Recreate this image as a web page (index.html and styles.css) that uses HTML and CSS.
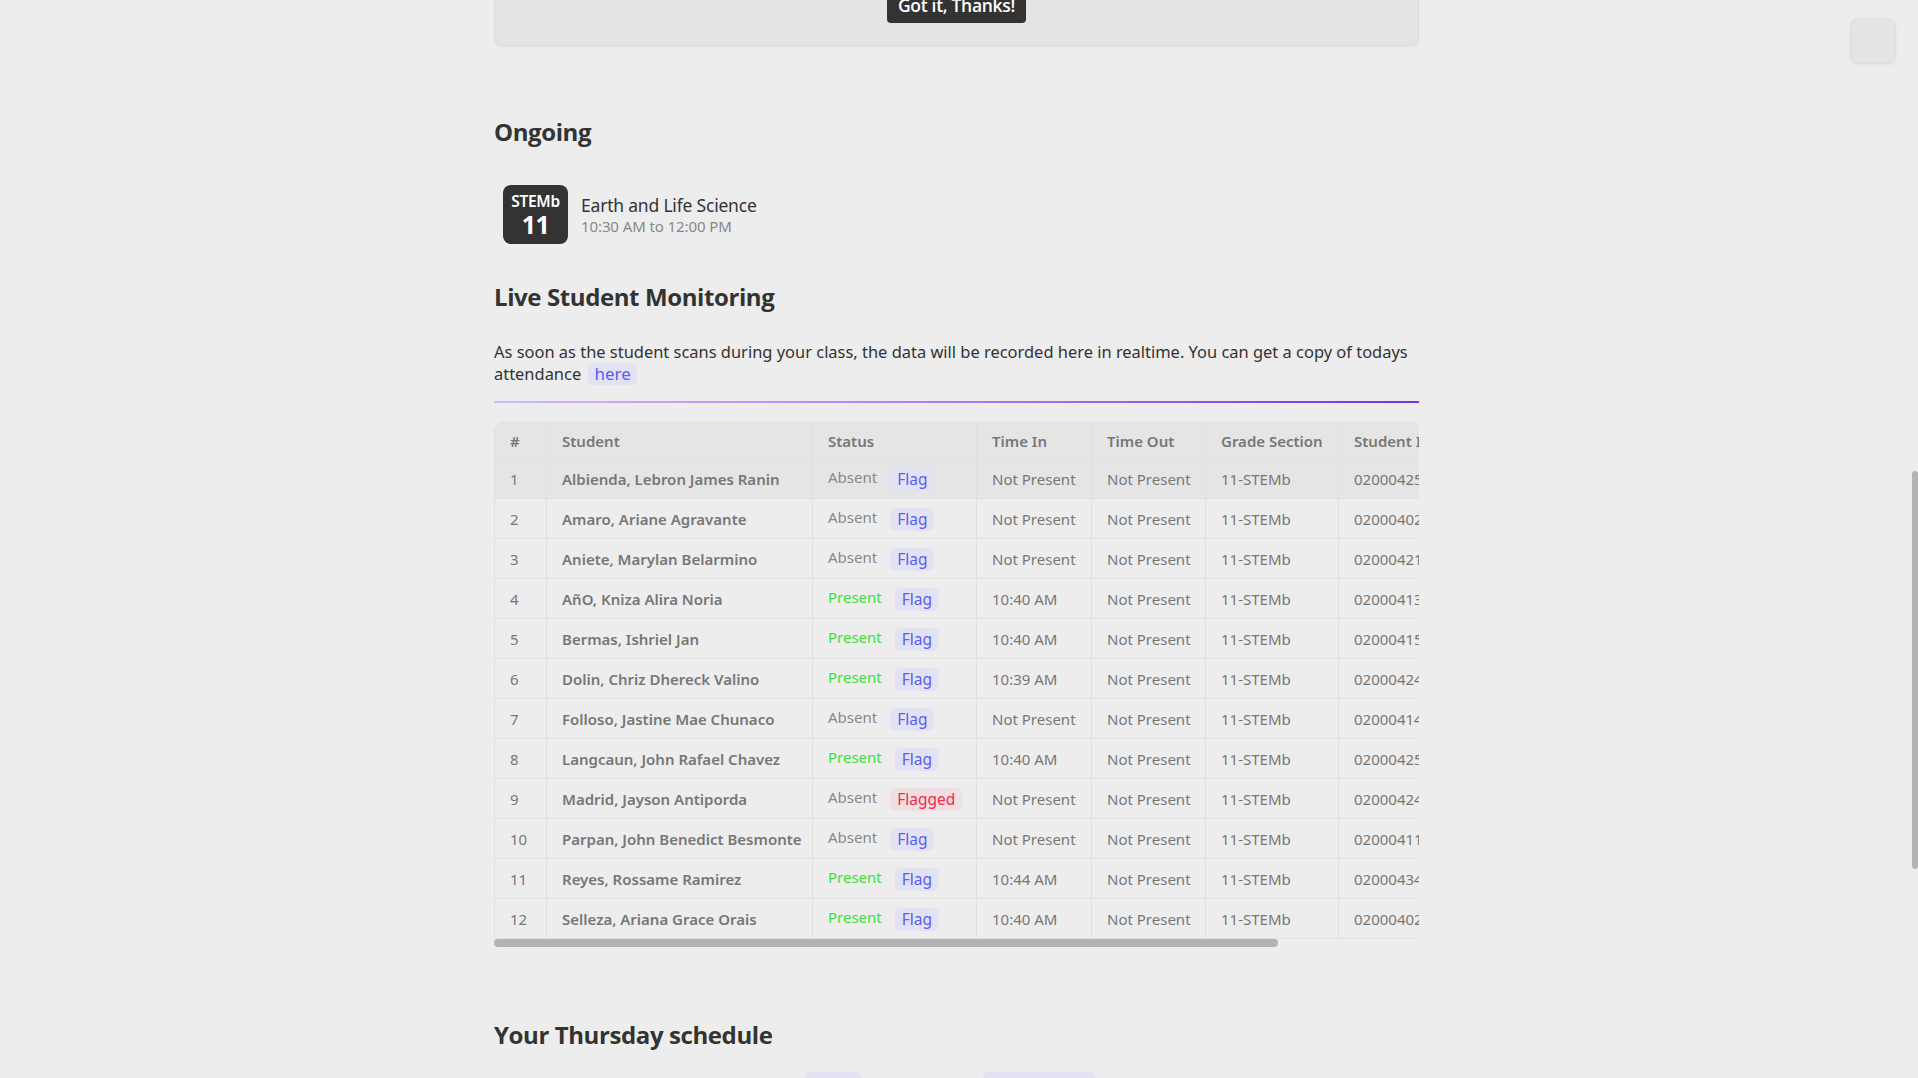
FILE: index.html
```html
<!DOCTYPE html>
<html lang="en">
<head>
<meta charset="utf-8">
<title>Dashboard</title>
<link rel="stylesheet" href="styles.css">
</head>
<body>
<div class="viewport">
  <main class="page">
    <section class="notice">
      <button class="btn-dark">Got it, Thanks!</button>
    </section>

    <h2 class="heading ongoing-title">Ongoing</h2>
    <div class="class-item">
      <div class="class-badge">
        <span class="badge-sec">STEMb</span>
        <span class="badge-grade">11</span>
      </div>
      <div class="class-info">
        <div class="class-name">Earth and Life Science</div>
        <div class="class-time">10:30 AM to 12:00 PM</div>
      </div>
    </div>

    <h2 class="heading live-title">Live Student Monitoring</h2>
    <p class="desc">As soon as the student scans during your class, the data will be recorded here in realtime. You can get a copy of todays attendance <a class="link-chip" href="#">here</a></p>
    <div class="divider"></div>

    <div class="table-wrap">
      <table class="att">
        <colgroup>
          <col class="c-num"><col class="c-student"><col class="c-status"><col class="c-in"><col class="c-out"><col class="c-grade"><col class="c-id">
        </colgroup>
        <thead>
          <tr><th>#</th><th>Student</th><th>Status</th><th>Time In</th><th>Time Out</th><th>Grade Section</th><th>Student ID</th></tr>
        </thead>
        <tbody>
          <tr class="hover"><td>1</td><td class="name">Albienda, Lebron James Ranin</td><td><span class="st absent">Absent</span><span class="flag">Flag</span></td><td>Not Present</td><td>Not Present</td><td>11-STEMb</td><td>02000425183</td></tr>
          <tr><td>2</td><td class="name">Amaro, Ariane Agravante</td><td><span class="st absent">Absent</span><span class="flag">Flag</span></td><td>Not Present</td><td>Not Present</td><td>11-STEMb</td><td>02000402671</td></tr>
          <tr><td>3</td><td class="name">Aniete, Marylan Belarmino</td><td><span class="st absent">Absent</span><span class="flag">Flag</span></td><td>Not Present</td><td>Not Present</td><td>11-STEMb</td><td>02000421554</td></tr>
          <tr><td>4</td><td class="name">AñO, Kniza Alira Noria</td><td><span class="st present">Present</span><span class="flag">Flag</span></td><td>10:40 AM</td><td>Not Present</td><td>11-STEMb</td><td>02000413902</td></tr>
          <tr><td>5</td><td class="name">Bermas, Ishriel Jan</td><td><span class="st present">Present</span><span class="flag">Flag</span></td><td>10:40 AM</td><td>Not Present</td><td>11-STEMb</td><td>02000415237</td></tr>
          <tr><td>6</td><td class="name">Dolin, Chriz Dhereck Valino</td><td><span class="st present">Present</span><span class="flag">Flag</span></td><td>10:39 AM</td><td>Not Present</td><td>11-STEMb</td><td>02000424810</td></tr>
          <tr><td>7</td><td class="name">Folloso, Jastine Mae Chunaco</td><td><span class="st absent">Absent</span><span class="flag">Flag</span></td><td>Not Present</td><td>Not Present</td><td>11-STEMb</td><td>02000414376</td></tr>
          <tr><td>8</td><td class="name">Langcaun, John Rafael Chavez</td><td><span class="st present">Present</span><span class="flag">Flag</span></td><td>10:40 AM</td><td>Not Present</td><td>11-STEMb</td><td>02000425649</td></tr>
          <tr><td>9</td><td class="name">Madrid, Jayson Antiporda</td><td><span class="st absent">Absent</span><span class="flag flagged">Flagged</span></td><td>Not Present</td><td>Not Present</td><td>11-STEMb</td><td>02000424095</td></tr>
          <tr><td>10</td><td class="name">Parpan, John Benedict Besmonte</td><td><span class="st absent">Absent</span><span class="flag">Flag</span></td><td>Not Present</td><td>Not Present</td><td>11-STEMb</td><td>02000411728</td></tr>
          <tr><td>11</td><td class="name">Reyes, Rossame Ramirez</td><td><span class="st present">Present</span><span class="flag">Flag</span></td><td>10:44 AM</td><td>Not Present</td><td>11-STEMb</td><td>02000434160</td></tr>
          <tr><td>12</td><td class="name">Selleza, Ariana Grace Orais</td><td><span class="st present">Present</span><span class="flag">Flag</span></td><td>10:40 AM</td><td>Not Present</td><td>11-STEMb</td><td>02000402583</td></tr>
        </tbody>
      </table>
    </div>
    <div class="hscroll"><div class="hscroll-thumb"></div></div>

    <h2 class="heading sched-title">Your Thursday schedule</h2>
    <div class="sched-row">
      <span class="chip chip-a">Mon</span>
      <span class="chip chip-b">STEMb 11</span>
    </div>
  </main>
</div>

<button class="corner-btn" aria-label="menu"></button>
<div class="page-scroll"></div>
</body>
</html>
```

FILE: styles.css
```css
html, body {
  margin: 0;
  padding: 0;
  height: 100%;
  overflow: hidden;
}

body {
  background: #ededed;
  font-family: "Noto Sans", "Open Sans", sans-serif;
  color: #333;
}

.viewport {
  display: flex;
  justify-content: center;
  padding-right: 5px;
}

.page {
  width: 925px;
  display: flex;
  flex-direction: column;
}

.notice {
  margin-top: -40px;
  background: #e4e4e4;
  border: 1px solid #dddddd;
  border-radius: 8px;
  box-shadow: 0 1px 2px rgba(0,0,0,0.05);
  padding: 26px 0 22px;
  display: flex;
  justify-content: center;
}

.btn-dark {
  height: 36px;
  padding: 0 11px;
  border: none;
  border-radius: 4px;
  background: #333333;
  color: #ffffff;
  font-family: "Open Sans", sans-serif;
  font-weight: 600;
  font-size: 17.5px;
  letter-spacing: -0.3px;
}

.heading {
  font-family: "Open Sans", sans-serif;
  font-weight: 700;
  font-size: 24px;
  line-height: 32px;
  color: #333;
  margin: 0;
  letter-spacing: -0.4px;
}

.ongoing-title {
  margin-top: 70px;
}

.class-item {
  display: flex;
  align-items: center;
  gap: 13px;
  margin: 37px 0 0 9px;
}

.class-badge {
  width: 65px;
  height: 59px;
  background: #333333;
  border-radius: 8px;
  color: #fff;
  display: flex;
  flex-direction: column;
  align-items: center;
  justify-content: center;
}

.badge-sec {
  font-size: 15.5px;
  font-weight: 600;
  line-height: 19px;
  letter-spacing: -0.3px;
}

.badge-grade {
  font-size: 25px;
  font-weight: 700;
  line-height: 27px;
  letter-spacing: -0.5px;
}

.class-name {
  font-size: 17.5px;
  line-height: 23px;
  color: #333;
  letter-spacing: -0.2px;
}

.class-time {
  font-size: 15px;
  line-height: 19px;
  color: #888;
  letter-spacing: -0.1px;
}

.live-title {
  margin-top: 37px;
}

.desc {
  margin: 28px 0 0;
  font-size: 16.45px;
  line-height: 22px;
  color: #333;
}

.link-chip {
  display: inline-block;
  color: #5b5bf7;
  background: #e2e2f2;
  border-radius: 6px;
  padding: 0 6px;
  margin-left: 3px;
  text-decoration: none;
  font-size: 17px;
  line-height: 22px;
  vertical-align: top;
}

.divider {
  margin-top: 16px;
  height: 2px;
  background: linear-gradient(90deg, #d2b8f8 0%, #a97cf2 50%, #7a2ee8 100%);
}

.table-wrap {
  margin-top: 19px;
  overflow: hidden;
  border-top-left-radius: 8px;
  border-top-right-radius: 8px;
}

.hscroll {
  height: 8px;
}

.hscroll-thumb {
  width: 784px;
  height: 8px;
  background: #b3b3b3;
  border-radius: 4px;
}

.att {
  border-collapse: separate;
  border-spacing: 0;
  width: 1091px;
  table-layout: fixed;
  font-size: 15px;
  color: #777;
}

.c-num { width: 53px; }
.c-student { width: 266px; }
.c-status { width: 164px; }
.c-in { width: 115px; }
.c-out { width: 114px; }
.c-grade { width: 133px; }
.c-id { width: 246px; }

.att th, .att td {
  text-align: left;
  padding: 0 15px;
  border-right: 1px solid #e0e0e0;
  border-bottom: 1px solid #e0e0e0;
  white-space: nowrap;
  overflow: hidden;
}

.att th:first-child, .att td:first-child {
  border-left: 1px solid #e0e0e0;
}

.att th {
  height: 35px;
  background: #e5e5e5;
  font-weight: 600;
  border-top: 1px solid #e0e0e0;
}

.att thead th:first-child { border-top-left-radius: 8px; }

.att td {
  height: 39px;
}

.att tr.hover td {
  background: #e5e5e5;
}

.att td.name {
  font-weight: 600;
}

.st {
  display: inline-block;
  vertical-align: 2px;
}
.st.absent { color: #888; }
.st.present { color: #3fdc3f; }

.flag {
  display: inline-block;
  margin-left: 13px;
  padding: 1px 7px;
  border-radius: 6px;
  background: #e2e2f2;
  color: #5b5bf7;
  font-size: 15.5px;
  line-height: 21px;
}

.flag.flagged {
  background: #efdfe2;
  color: #f5264a;
}

.sched-title {
  margin-top: 72px;
}

.sched-row {
  display: flex;
  margin-top: 21px;
  padding-left: 310px;
  gap: 121px;
}

.chip {
  display: inline-block;
  height: 28px;
  border-radius: 6px;
  background: #e2e2f2;
  color: #5b5bf7;
  font-size: 14px;
  line-height: 28px;
  padding: 0 10px;
}
.chip-a { width: 38px; }
.chip-b { width: 93px; }

.corner-btn {
  position: fixed;
  top: 18px;
  right: 22px;
  width: 46px;
  height: 46px;
  background: #e4e4e4;
  border: 1px solid #dedede;
  border-radius: 8px;
  box-shadow: 0 1px 3px rgba(0,0,0,0.05);
}

.page-scroll {
  position: fixed;
  right: 0;
  top: 471px;
  width: 6px;
  height: 398px;
  background: #b3b3b3;
  border-radius: 3px;
}
```
